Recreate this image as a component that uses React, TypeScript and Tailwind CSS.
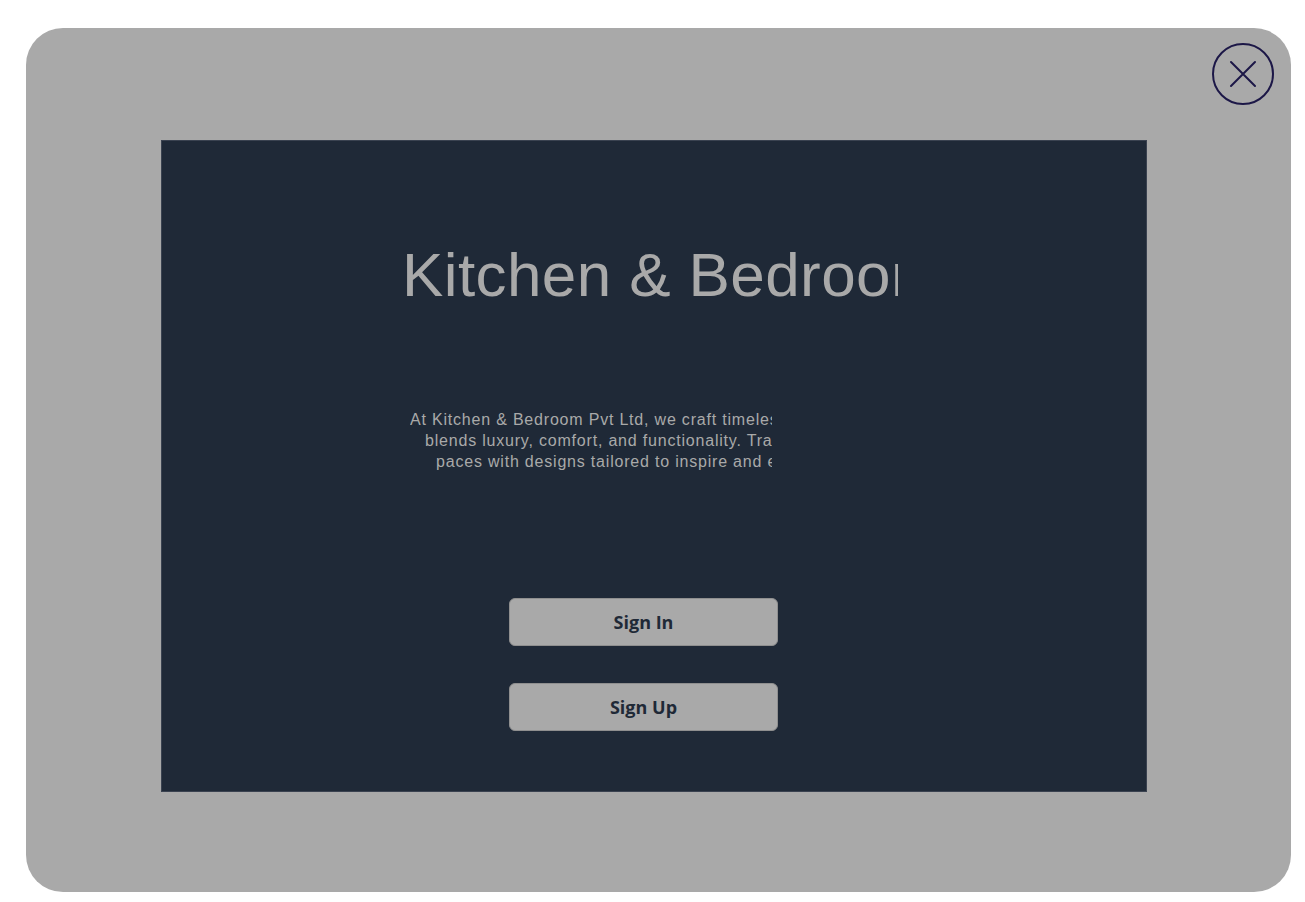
export default function App() {
  return (
    <main className="min-h-screen w-full bg-white pt-[28px] pl-[26px]">
      <div className="relative w-[1265px] h-[864px] rounded-[37px] bg-[#a9a9a9] pt-[112px] pl-[135px]">
        {/* close button */}
        <button className="absolute top-[15px] right-[17px] w-[62px] h-[62px] flex items-center justify-center">
          <svg width="62" height="62" viewBox="0 0 62 62" fill="none" stroke="#1c1747" strokeWidth={2} strokeLinecap="round">
            <circle cx="31" cy="31" r="30" />
            <path d="M19 19L43 43M43 19L19 43" />
          </svg>
        </button>

        {/* hero card */}
        <div className="w-[986px] h-[652px] bg-[#1f2937] border border-[#3a4250] flex flex-col items-start pt-[98px]">
          <div className="ml-[240px] w-[496px] overflow-hidden">
            <h1
              className="whitespace-nowrap text-[62px] leading-[72px] tracking-[0.4px] text-[#a9a9a9]"
              style={{ fontFamily: '"Liberation Sans", Arial, sans-serif' }}
            >
              Kitchen &amp; Bedroom Pvt Ltd
            </h1>
          </div>

          <div
            className="mt-[98px] ml-[248px] w-[362px] overflow-hidden text-[16px] leading-[21px] tracking-[0.8px] text-[#a9a9a9]"
            style={{ fontFamily: '"Liberation Sans", Arial, sans-serif' }}
          >
            <p className="whitespace-nowrap">At Kitchen &amp; Bedroom Pvt Ltd, we craft timeless interiors that</p>
            <p className="whitespace-nowrap pl-[15px]">blends luxury, comfort, and functionality. Transform your living s</p>
            <p className="whitespace-nowrap pl-[26px]">paces with designs tailored to inspire and elevate.</p>
          </div>

          <div
            className="mt-[126px] ml-[347px] flex flex-col gap-[37px]"
            style={{ fontFamily: '"Open Sans", "Noto Sans", sans-serif' }}
          >
            <button className="w-[269px] h-[48px] rounded-md bg-[#a9a9a9] border border-[#8f8f8f] text-[18px] font-bold text-[#1f2937]">
              Sign In
            </button>
            <button className="w-[269px] h-[48px] rounded-md bg-[#a9a9a9] border border-[#8f8f8f] text-[18px] font-bold text-[#1f2937]">
              Sign Up
            </button>
          </div>
        </div>
      </div>
    </main>
  );
}
